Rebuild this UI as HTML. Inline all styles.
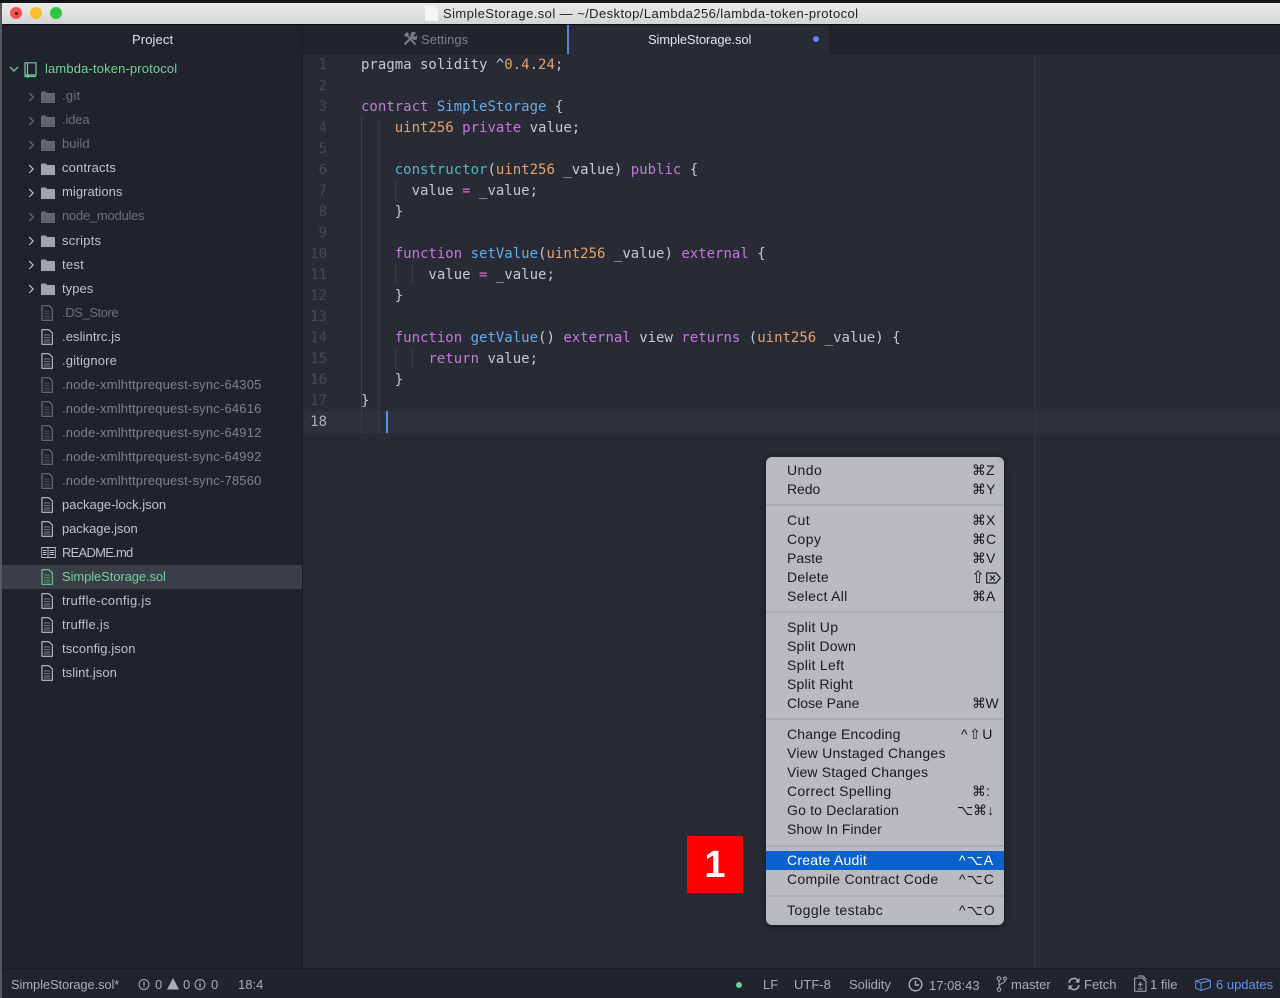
<!DOCTYPE html>
<html><head><meta charset="utf-8"><style>
html,body{margin:0;padding:0;background:#282b35;width:1280px;height:998px;overflow:hidden}
body{position:relative;font-family:"Liberation Sans",sans-serif}
.a{position:absolute}
.t{position:absolute;white-space:pre;line-height:16px;height:16px}
#sb .t{left:62px;font-size:13px;color:#bfc3cc;letter-spacing:.25px}
#sb .d{color:#6c7079}
#sb svg{position:absolute}
.c{position:absolute;white-space:pre;font:14px/21px "DejaVu Sans Mono",monospace;color:#c5c9d2;left:361px;height:21px}
.n{position:absolute;left:304px;width:23px;text-align:right;font:14px/21px "DejaVu Sans Mono",monospace;color:#454954;height:21px}
.k{color:#c678dd}.o{color:#e5a36c}.b{color:#61aeee}.y{color:#56b6c2}.p{color:#e06cc0}
.g{position:absolute;width:1px;background:#3a3e49}
.m{position:absolute;left:787px;font-size:14px;line-height:19px;height:19px;color:#1a1a1c;white-space:pre;letter-spacing:.42px}
.s{position:absolute;font-size:14px;line-height:19px;height:19px;color:#1a1a1c;white-space:pre;font-family:"Liberation Sans","DejaVu Sans",sans-serif}
.h{position:absolute;left:766px;width:238px;height:2px;background:#a9abaf}
.st{position:absolute;top:977px;font-size:13px;line-height:16px;color:#a9adb6;white-space:pre}
</style></head><body>
<svg width="0" height="0" style="position:absolute"><defs>
<symbol id="f" viewBox="0 0 14 12"><path d="M0 1.500Q0 .5 1 .5H5L6 2H13Q14 2 14 3V12H0Z" fill="currentColor"/></symbol>
<symbol id="d" viewBox="0 0 12 16"><path d="M1 .7H8L11.300 4V15.300H1Z" fill="none" stroke="currentColor" stroke-width="1.100"/><path d="M3 6H9M3 8.500H9M3 11H9M3 13H9" stroke="currentColor" stroke-width=".8" opacity=".75"/></symbol>
<symbol id="r" viewBox="0 0 7 10"><path d="M1.200 1 5.200 5 1.200 9" fill="none" stroke="currentColor" stroke-width="1.200"/></symbol>
</defs></svg>

<!-- title bar -->
<div class="a" style="left:0;top:0;width:1280px;height:3px;background:#14161b"></div>
<div class="a" style="left:2px;top:3px;width:1278px;height:21px;background:linear-gradient(#ebebeb,#d5d5d5)"></div>
<div class="a" style="left:0;top:24px;width:1280px;height:1px;background:#0b0c0e"></div>
<div class="a" style="left:0;top:3px;width:2px;height:995px;background:#55585d"></div>
<div class="a" style="left:10px;top:7px;width:12px;height:12px;border-radius:50%;background:#f5554f"></div>
<div class="a" style="left:14.500px;top:11.500px;width:3px;height:3px;border-radius:50%;background:#5e0c08"></div>
<div class="a" style="left:30px;top:7px;width:12px;height:12px;border-radius:50%;background:#fbbc2e"></div>
<div class="a" style="left:50px;top:7px;width:12px;height:12px;border-radius:50%;background:#29c73f"></div>
<svg class="a" style="left:425px;top:6px" width="13" height="15"><path d="M0 0H9L13 4V15H0Z" fill="#f6f6f6"/></svg>
<div class="t" style="left:443px;top:6px;font-size:13px;color:#222;letter-spacing:.42px">SimpleStorage.sol — ~/Desktop/Lambda256/lambda-token-protocol</div>

<!-- sidebar -->
<div class="a" style="left:2px;top:25px;width:300px;height:943px;background:#20232b"></div>
<div class="a" style="left:302px;top:25px;width:1px;height:943px;background:#1a1c22"></div>
<div class="a" style="left:2px;top:565px;width:300px;height:24px;background:#3a3e48"></div>
<div class="t" style="left:132px;top:32px;font-size:13px;color:#dfe2e8;letter-spacing:.1px">Project</div>
<div id="sb">
<svg style="left:9px;top:66px;color:#6fcf97" width="10" height="7"><path d="M1 1 5 5 9 1" fill="none" stroke="currentColor" stroke-width="1.300"/></svg>
<svg style="left:24px;top:62px;color:#6fcf97" width="13" height="16"><path d="M1 .8H12V13H1ZM3.500 1V13M1 13V14.500H12M4 13V16" fill="none" stroke="currentColor" stroke-width="1.200"/></svg>
<div class="t" style="left:45px;top:61px;color:#74d29c;letter-spacing:.14px">lambda-token-protocol</div>

<svg style="left:28px;top:92px;color:#6c7079" width="7" height="10"><use href="#r"/></svg><svg style="left:41px;top:91px;color:#62666f" width="14" height="12"><use href="#f"/></svg><div class="t d" style="top:88px">.git</div>
<svg style="left:28px;top:116px;color:#6c7079" width="7" height="10"><use href="#r"/></svg><svg style="left:41px;top:115px;color:#62666f" width="14" height="12"><use href="#f"/></svg><div class="t d" style="top:112px;letter-spacing:-.15px">.idea</div>
<svg style="left:28px;top:140px;color:#6c7079" width="7" height="10"><use href="#r"/></svg><svg style="left:41px;top:139px;color:#62666f" width="14" height="12"><use href="#f"/></svg><div class="t d" style="top:136px;letter-spacing:.05px">build</div>
<svg style="left:28px;top:164px;color:#bfc3cc" width="7" height="10"><use href="#r"/></svg><svg style="left:41px;top:163px;color:#a0a5b1" width="14" height="12"><use href="#f"/></svg><div class="t" style="top:160px;letter-spacing:.14px">contracts</div>
<svg style="left:28px;top:188px;color:#bfc3cc" width="7" height="10"><use href="#r"/></svg><svg style="left:41px;top:187px;color:#a0a5b1" width="14" height="12"><use href="#f"/></svg><div class="t" style="top:184px;letter-spacing:.05px">migrations</div>
<svg style="left:28px;top:212px;color:#6c7079" width="7" height="10"><use href="#r"/></svg><svg style="left:41px;top:211px;color:#62666f" width="14" height="12"><use href="#f"/></svg><div class="t d" style="top:208px;letter-spacing:-.25px">node_modules</div>
<svg style="left:28px;top:236px;color:#bfc3cc" width="7" height="10"><use href="#r"/></svg><svg style="left:41px;top:235px;color:#a0a5b1" width="14" height="12"><use href="#f"/></svg><div class="t" style="top:233px">scripts</div>
<svg style="left:28px;top:260px;color:#bfc3cc" width="7" height="10"><use href="#r"/></svg><svg style="left:41px;top:259px;color:#a0a5b1" width="14" height="12"><use href="#f"/></svg><div class="t" style="top:257px">test</div>
<svg style="left:28px;top:284px;color:#bfc3cc" width="7" height="10"><use href="#r"/></svg><svg style="left:41px;top:283px;color:#a0a5b1" width="14" height="12"><use href="#f"/></svg><div class="t" style="top:281px;letter-spacing:.05px">types</div>

<svg style="left:41px;top:305px;color:#6c7079" width="12" height="16"><use href="#d"/></svg><div class="t d" style="top:305px;letter-spacing:-.42px">.DS_Store</div>
<svg style="left:41px;top:329px;color:#bfc3cc" width="12" height="16"><use href="#d"/></svg><div class="t" style="top:329px;letter-spacing:.08px">.eslintrc.js</div>
<svg style="left:41px;top:353px;color:#bfc3cc" width="12" height="16"><use href="#d"/></svg><div class="t" style="top:353px;letter-spacing:.15px">.gitignore</div>
<svg style="left:41px;top:377px;color:#6c7079" width="12" height="16"><use href="#d"/></svg><div class="t d" style="top:377px;color:#7e828b;letter-spacing:.19px">.node-xmlhttprequest-sync-64305</div>
<svg style="left:41px;top:401px;color:#6c7079" width="12" height="16"><use href="#d"/></svg><div class="t d" style="top:401px;color:#7e828b;letter-spacing:.19px">.node-xmlhttprequest-sync-64616</div>
<svg style="left:41px;top:425px;color:#6c7079" width="12" height="16"><use href="#d"/></svg><div class="t d" style="top:425px;color:#7e828b;letter-spacing:.19px">.node-xmlhttprequest-sync-64912</div>
<svg style="left:41px;top:449px;color:#6c7079" width="12" height="16"><use href="#d"/></svg><div class="t d" style="top:449px;color:#7e828b;letter-spacing:.19px">.node-xmlhttprequest-sync-64992</div>
<svg style="left:41px;top:473px;color:#6c7079" width="12" height="16"><use href="#d"/></svg><div class="t d" style="top:473px;color:#7e828b;letter-spacing:.19px">.node-xmlhttprequest-sync-78560</div>
<svg style="left:41px;top:497px;color:#bfc3cc" width="12" height="16"><use href="#d"/></svg><div class="t" style="top:497px;letter-spacing:0">package-lock.json</div>
<svg style="left:41px;top:521px;color:#bfc3cc" width="12" height="16"><use href="#d"/></svg><div class="t" style="top:521px;letter-spacing:-.08px">package.json</div>
<svg style="left:41px;top:546px;color:#bfc3cc" width="15" height="13"><path d="M.7 1.500H7V11.500H.7ZM7 1.500H14.300V11.500H7ZM2 4.500H5.500M2 6.500H5.500M2 8.500H5.500M8.500 4.500H13M8.500 6.500H13M8.500 8.500H13" fill="none" stroke="currentColor" stroke-width=".9"/></svg><div class="t" style="top:545px;letter-spacing:-.75px">README.md</div>
<svg style="left:41px;top:569px;color:#6fcf97" width="12" height="16"><use href="#d"/></svg><div class="t" style="top:569px;color:#74d29c;letter-spacing:-.1px">SimpleStorage.sol</div>
<svg style="left:41px;top:593px;color:#bfc3cc" width="12" height="16"><use href="#d"/></svg><div class="t" style="top:593px;letter-spacing:.3px">truffle-config.js</div>
<svg style="left:41px;top:617px;color:#bfc3cc" width="12" height="16"><use href="#d"/></svg><div class="t" style="top:617px">truffle.js</div>
<svg style="left:41px;top:641px;color:#bfc3cc" width="12" height="16"><use href="#d"/></svg><div class="t" style="top:641px;letter-spacing:.1px">tsconfig.json</div>
<svg style="left:41px;top:665px;color:#bfc3cc" width="12" height="16"><use href="#d"/></svg><div class="t" style="top:665px;letter-spacing:.07px">tslint.json</div>
</div>

<!-- tabs -->
<div class="a" style="left:303px;top:25px;width:977px;height:29px;background:#21242c"></div>
<div class="a" style="left:303px;top:53px;width:977px;height:1px;background:#1b1d23"></div>
<div class="a" style="left:569px;top:25px;width:262px;height:29px;background:#282b35"></div>
<div class="a" style="left:830px;top:25px;width:1px;height:29px;background:#1a1c22"></div>
<div class="a" style="left:567px;top:25px;width:2px;height:29px;background:#5685d8"></div>
<svg class="a" style="left:403px;top:32px" width="14" height="14"><path d="M1.500 12.500 9 5M3 2 12.500 12.500" fill="none" stroke="#7b7f88" stroke-width="2"/><path d="M1 3 4 0 6 2 3 5ZM8 5A3 3 0 0 1 13 1L10.500 3.500 12 5 14 3A3 3 0 0 1 9.500 7Z" fill="#7b7f88"/></svg>
<div class="t" style="left:421px;top:32px;font-size:13px;color:#7b7f88;letter-spacing:.03px">Settings</div>
<div class="t" style="left:648px;top:32px;font-size:13px;color:#e2e5ea;letter-spacing:-.135px">SimpleStorage.sol</div>
<div class="a" style="left:813px;top:36px;width:6px;height:6px;border-radius:50%;background:#568af2"></div>

<!-- editor -->
<div class="a" style="left:303px;top:411px;width:977px;height:22px;background:#2d313c"></div>
<div class="a" style="left:1035px;top:54px;width:1px;height:914px;background:#343842"></div>
<div class="g" style="left:361px;top:117px;height:294px"></div>
<div class="g" style="left:378px;top:117px;height:294px;background:#33363f"></div>
<div class="g" style="left:395px;top:180px;height:21px"></div>
<div class="g" style="left:395px;top:264px;height:21px"></div>
<div class="g" style="left:412px;top:264px;height:21px"></div>
<div class="g" style="left:395px;top:348px;height:21px"></div>
<div class="g" style="left:412px;top:348px;height:21px"></div>
<div class="g" style="left:361px;top:411px;height:22px"></div>
<div class="g" style="left:378px;top:411px;height:22px"></div>
<div class="a" style="left:386px;top:411px;width:2px;height:22px;background:#5d8fe8"></div>

<div class="n" style="top:55px">1</div><div class="n" style="top:76px">2</div><div class="n" style="top:97px">3</div><div class="n" style="top:118px">4</div><div class="n" style="top:139px">5</div><div class="n" style="top:160px">6</div><div class="n" style="top:181px">7</div><div class="n" style="top:202px">8</div><div class="n" style="top:223px">9</div><div class="n" style="top:244px">10</div><div class="n" style="top:265px">11</div><div class="n" style="top:286px">12</div><div class="n" style="top:307px">13</div><div class="n" style="top:328px">14</div><div class="n" style="top:349px">15</div><div class="n" style="top:370px">16</div><div class="n" style="top:391px">17</div><div class="n" style="top:412px;color:#a9adb6">18</div>

<div class="c" style="top:55px">pragma solidity ^<span class="o">0.4.24</span>;</div>
<div class="c" style="top:97px"><span class="k">contract</span> <span class="b">SimpleStorage</span> {</div>
<div class="c" style="top:118px">    <span class="o">uint256</span> <span class="k">private</span> value;</div>
<div class="c" style="top:160px">    <span class="y">constructor</span>(<span class="o">uint256</span> _value) <span class="k">public</span> {</div>
<div class="c" style="top:181px">      value <span class="p">=</span> _value;</div>
<div class="c" style="top:202px">    }</div>
<div class="c" style="top:244px">    <span class="k">function</span> <span class="b">setValue</span>(<span class="o">uint256</span> _value) <span class="k">external</span> {</div>
<div class="c" style="top:265px">        value <span class="p">=</span> _value;</div>
<div class="c" style="top:286px">    }</div>
<div class="c" style="top:328px">    <span class="k">function</span> <span class="b">getValue</span>() <span class="k">external</span> view <span class="k">returns</span> (<span class="o">uint256</span> _value) {</div>
<div class="c" style="top:349px">        <span class="k">return</span> value;</div>
<div class="c" style="top:370px">    }</div>
<div class="c" style="top:391px">}</div>

<!-- context menu -->
<div class="a" style="left:766px;top:457px;width:238px;height:468px;background:#b9babd;border-radius:6px;box-shadow:0 2px 8px rgba(0,0,0,.45)"></div>
<div class="h" style="top:504px"></div><div class="h" style="top:611px"></div><div class="h" style="top:718px"></div><div class="h" style="top:845px"></div><div class="h" style="top:895px"></div>
<div class="a" style="left:766px;top:851px;width:238px;height:19px;background:#0a62cf"></div>

<div class="m" style="top:461px">Undo</div><div class="s" style="left:972px;top:461px">⌘Z</div>
<div class="m" style="top:480px;letter-spacing:-.08px">Redo</div><div class="s" style="left:972px;top:480px">⌘Y</div>
<div class="m" style="top:511px">Cut</div><div class="s" style="left:972px;top:511px">⌘X</div>
<div class="m" style="top:530px">Copy</div><div class="s" style="left:972px;top:530px">⌘C</div>
<div class="m" style="top:549px;letter-spacing:0">Paste</div><div class="s" style="left:972px;top:549px">⌘V</div>
<div class="m" style="top:568px;letter-spacing:.25px">Delete</div><div class="s" style="left:971px;top:568px;font-size:17px">⇧</div>
<svg class="a" style="left:986px;top:572px" width="15" height="12"><path d="M.7 1H10L14.300 6 10 11H.7ZM4 3.500 9 8.500M9 3.500 4 8.500" fill="none" stroke="#1a1a1c" stroke-width="1.200"/></svg>
<div class="m" style="top:587px;letter-spacing:.3px">Select All</div><div class="s" style="left:972px;top:587px">⌘A</div>
<div class="m" style="top:618px;letter-spacing:.28px">Split Up</div>
<div class="m" style="top:637px;letter-spacing:.22px">Split Down</div>
<div class="m" style="top:656px;letter-spacing:.3px">Split Left</div>
<div class="m" style="top:675px;letter-spacing:.2px">Split Right</div>
<div class="m" style="top:694px;letter-spacing:0">Close Pane</div><div class="s" style="left:972px;top:694px;letter-spacing:-.5px">⌘W</div>
<div class="m" style="top:725px;letter-spacing:.15px">Change Encoding</div><div class="s" style="left:961px;top:725px;letter-spacing:1.500px">^⇧U</div>
<div class="m" style="top:744px;letter-spacing:.23px">View Unstaged Changes</div>
<div class="m" style="top:763px;letter-spacing:.15px">View Staged Changes</div>
<div class="m" style="top:782px;letter-spacing:.3px">Correct Spelling</div><div class="s" style="left:972px;top:782px">⌘:</div>
<div class="m" style="top:801px;letter-spacing:.18px">Go to Declaration</div><div class="s" style="left:957px;top:801px">⌥⌘↓</div>
<div class="m" style="top:820px;letter-spacing:.05px">Show In Finder</div>
<div class="m" style="top:851px;color:#fff;letter-spacing:.25px">Create Audit</div><div class="s" style="left:959px;top:851px;color:#fff;letter-spacing:1px">^⌥A</div>
<div class="m" style="top:870px;letter-spacing:.28px">Compile Contract Code</div><div class="s" style="left:959px;top:870px;letter-spacing:1px">^⌥C</div>
<div class="m" style="top:901px">Toggle testabc</div><div class="s" style="left:959px;top:901px;letter-spacing:1px">^⌥O</div>

<!-- red badge -->
<div class="a" style="left:687px;top:836px;width:56px;height:57px;background:#fe0000;color:#fff;font:bold 38px/59px 'Liberation Sans',sans-serif;text-align:center">1</div>

<!-- status bar -->
<div class="a" style="left:2px;top:968px;width:1278px;height:30px;background:#21242c;border-top:1px solid #1a1c22;box-sizing:border-box"></div>
<div class="st" style="left:11px;letter-spacing:-.13px">SimpleStorage.sol*</div>
<svg class="a" style="left:138px;top:978px" width="12" height="13"><circle cx="6" cy="6.500" r="5" fill="none" stroke="#a9adb6" stroke-width="1"/><path d="M6 3.500V7.500M6 8.500V9.800" stroke="#a9adb6" stroke-width="1.200"/></svg>
<div class="st" style="left:155px">0</div>
<svg class="a" style="left:167px;top:978px" width="12" height="12"><path d="M6 0 12 11.500H0Z" fill="#a9adb6"/></svg>
<div class="st" style="left:183px">0</div>
<svg class="a" style="left:194px;top:978px" width="12" height="13"><circle cx="6" cy="6.500" r="5" fill="none" stroke="#a9adb6" stroke-width="1"/><path d="M6 3V4.300M6 5.500V9.800" stroke="#a9adb6" stroke-width="1.200"/></svg>
<div class="st" style="left:211px">0</div>
<div class="st" style="left:238px">18:4</div>
<div class="a" style="left:736px;top:982px;width:6px;height:6px;border-radius:50%;background:#6fcf97"></div>
<div class="st" style="left:763px">LF</div>
<div class="st" style="left:794px">UTF-8</div>
<div class="st" style="left:849px">Solidity</div>
<svg class="a" style="left:908px;top:977px" width="15" height="15"><circle cx="7.500" cy="7.500" r="6.300" fill="none" stroke="#a9adb6" stroke-width="1.400"/><path d="M7.500 3.500V8H11" fill="none" stroke="#a9adb6" stroke-width="1.400"/></svg>
<div class="st" style="left:929px;top:978px">17:08:43</div>
<svg class="a" style="left:996px;top:976px" width="11" height="16"><circle cx="3" cy="2.500" r="1.800" fill="none" stroke="#a9adb6"/><circle cx="3" cy="13.500" r="1.800" fill="none" stroke="#a9adb6"/><circle cx="9" cy="2.500" r="1.500" fill="none" stroke="#a9adb6"/><path d="M3 4.500V11.500M9 4.500C9 8 3 7 3 10" fill="none" stroke="#a9adb6"/></svg>
<div class="st" style="left:1011px">master</div>
<svg class="a" style="left:1067px;top:977px" width="14" height="14"><path d="M2 6A5 5 0 0 1 11 3.500M12 8A5 5 0 0 1 3 10.500" fill="none" stroke="#a9adb6" stroke-width="1.500"/><path d="M12.500 1V5.500H8ZM1.500 13V8.500H6Z" fill="#a9adb6"/></svg>
<div class="st" style="left:1084px">Fetch</div>
<svg class="a" style="left:1134px;top:975px" width="13" height="17"><path d="M.7 3H8.500L12 6.500V16.300H.7ZM4 1H9L12.500 4.500" fill="none" stroke="#a9adb6"/><path d="M6.300 7V12M4 9.300H8.600M4 14H8.600" stroke="#a9adb6"/></svg>
<div class="st" style="left:1150px">1 file</div>
<svg class="a" style="left:1195px;top:978px" width="16" height="13"><path d="M.7 3 10 .7 15.300 2.500V9.500L6 12.300.7 10ZM.7 3 6 5 15.300 2.500M6 5V12.300" fill="none" stroke="#6494ed" stroke-width="1"/></svg>
<div class="st" style="left:1216px;color:#6494ed">6 updates</div>
</body></html>
